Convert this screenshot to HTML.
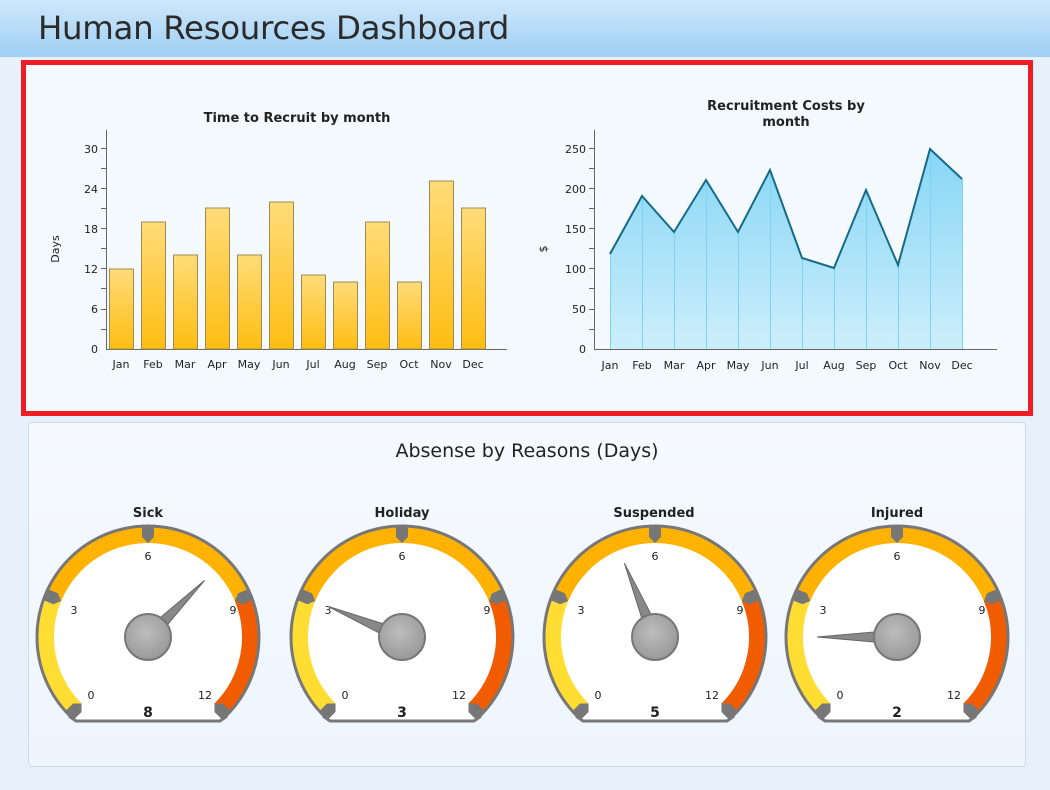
<!DOCTYPE html>
<html><head><meta charset="utf-8"><style>
body{margin:0;width:1050px;height:790px;background:#e6f1fc;font-family:"Liberation Sans","DejaVu Sans",sans-serif;overflow:hidden;position:relative}
.hdr{position:absolute;left:0;top:0;width:1050px;height:57px;background:linear-gradient(#cfe7fb,#9fcff3)}
.hdr h1{margin:0;position:absolute;left:38px;top:9px;font-weight:normal;font-size:32.4px;color:#2b2b2b;font-family:"DejaVu Sans","Liberation Sans",sans-serif;letter-spacing:-0.3px}
.red{position:absolute;left:21px;top:60px;width:1002px;height:346px;border:5px solid #ee1c25;background:#f4f9fe}
.pan{position:absolute;left:28px;top:422px;width:996px;height:343px;border:1px solid #cfdbe6;border-radius:4px;background:linear-gradient(#f6faff,#eef5fd)}
svg{position:absolute;left:0;top:0}
text{font-family:"DejaVu Sans","Liberation Sans",sans-serif;fill:#222}
</style></head><body>
<div class="hdr"><h1>Human Resources Dashboard</h1></div>
<div class="red"></div>
<div class="pan"></div>
<svg width="1050" height="790" viewBox="0 0 1050 790">
<defs>
<linearGradient id="bg" x1="0" y1="0" x2="0" y2="1"><stop offset="0" stop-color="#ffdc7a"/><stop offset="1" stop-color="#fdbd12"/></linearGradient>
<linearGradient id="ag" x1="0" y1="0" x2="0" y2="1"><stop offset="0" stop-color="#86d6f5"/><stop offset="1" stop-color="#cdeefb"/></linearGradient>
<radialGradient id="hub" cx="0.45" cy="0.4" r="0.6"><stop offset="0" stop-color="#bdbdbd"/><stop offset="1" stop-color="#999"/></radialGradient>
<g id="tick"><polygon points="-6,-112 6,-112 6,-100 0,-94 -6,-100" fill="#777"/></g>
<g id="gauge">
<path d="M -66.5,66.5 A 94 94 0 1 1 66.5,66.5 L 79,79 L 72,84 L -72,84 L -79,79 Z" fill="#fff"/>
<circle r="102" fill="none" stroke="#ffdd33" stroke-width="16" stroke-dasharray="120.2 520.7" transform="rotate(135)"/>
<circle r="102" fill="none" stroke="#ffb300" stroke-width="16" stroke-dasharray="240.3 400.6" transform="rotate(202.5)"/>
<circle r="102" fill="none" stroke="#f25c00" stroke-width="16" stroke-dasharray="120.2 520.7" transform="rotate(337.5)"/>
<circle r="111" fill="none" stroke="#777" stroke-width="3" stroke-dasharray="523 175" transform="rotate(135)"/>
<polyline points="-79,79 -72,84 72,84 79,79" fill="none" stroke="#777" stroke-width="3"/>
<use href="#tick" transform="rotate(-135)"/><use href="#tick" transform="rotate(-67.5)"/><use href="#tick"/><use href="#tick" transform="rotate(67.5)"/><use href="#tick" transform="rotate(135)"/>
<g font-size="11" text-anchor="middle"><text x="0" y="-77">6</text><text x="-74" y="-23">3</text><text x="85" y="-23">9</text><text x="-57" y="62">0</text><text x="57" y="62">12</text></g>
</g>
</defs>

<!-- bar chart -->
<text x="297" y="122" font-size="13" font-weight="bold" text-anchor="middle">Time to Recruit by month</text>
<text transform="translate(59,249) rotate(-90)" font-size="11" text-anchor="middle">Days</text>
<g stroke="#666" stroke-width="1">
<line x1="106.5" y1="130" x2="106.5" y2="349"/><line x1="106" y1="349.5" x2="507" y2="349.5"/>
<line x1="101" y1="148.5" x2="106" y2="148.5"/><line x1="101" y1="168.5" x2="106" y2="168.5"/><line x1="101" y1="188.5" x2="106" y2="188.5"/><line x1="101" y1="208.5" x2="106" y2="208.5"/><line x1="101" y1="228.5" x2="106" y2="228.5"/><line x1="101" y1="248.5" x2="106" y2="248.5"/><line x1="101" y1="268.5" x2="106" y2="268.5"/><line x1="101" y1="288.5" x2="106" y2="288.5"/><line x1="101" y1="309.5" x2="106" y2="309.5"/><line x1="101" y1="329.5" x2="106" y2="329.5"/>
</g>
<g font-size="11" text-anchor="end"><text x="98" y="153">30</text><text x="98" y="193">24</text><text x="98" y="233">18</text><text x="98" y="273">12</text><text x="98" y="313">6</text><text x="98" y="353">0</text></g>
<g fill="url(#bg)" stroke="#a08a50" stroke-width="1">
<rect x="109.5" y="269" width="24" height="80"/><rect x="141.5" y="222" width="24" height="127"/><rect x="173.5" y="255" width="24" height="94"/><rect x="205.5" y="208" width="24" height="141"/><rect x="237.5" y="255" width="24" height="94"/><rect x="269.5" y="202" width="24" height="147"/><rect x="301.5" y="275" width="24" height="74"/><rect x="333.5" y="282" width="24" height="67"/><rect x="365.5" y="222" width="24" height="127"/><rect x="397.5" y="282" width="24" height="67"/><rect x="429.5" y="181" width="24" height="168"/><rect x="461.5" y="208" width="24" height="141"/>
</g>
<g font-size="11" text-anchor="middle"><text x="121" y="368">Jan</text><text x="153" y="368">Feb</text><text x="185" y="368">Mar</text><text x="217" y="368">Apr</text><text x="249" y="368">May</text><text x="281" y="368">Jun</text><text x="313" y="368">Jul</text><text x="345" y="368">Aug</text><text x="377" y="368">Sep</text><text x="409" y="368">Oct</text><text x="441" y="368">Nov</text><text x="473" y="368">Dec</text></g>

<!-- area chart -->
<text x="786" y="110" font-size="13" font-weight="bold" text-anchor="middle">Recruitment Costs by</text>
<text x="786" y="126" font-size="13" font-weight="bold" text-anchor="middle">month</text>
<text transform="translate(547,249) rotate(-90)" font-size="11" text-anchor="middle">$</text>
<polygon points="610,349 610,254 642,196 674,232 706,180 738,232 770,170 802,258 834,268 866,190 898,265 930,149 962,179 962,349" fill="url(#ag)"/>
<g stroke="#7dd3f3" stroke-width="1"><line x1="642.5" y1="197" x2="642.5" y2="349"/><line x1="674.5" y1="233" x2="674.5" y2="349"/><line x1="706.5" y1="181" x2="706.5" y2="349"/><line x1="738.5" y1="233" x2="738.5" y2="349"/><line x1="770.5" y1="171" x2="770.5" y2="349"/><line x1="802.5" y1="258" x2="802.5" y2="349"/><line x1="834.5" y1="268" x2="834.5" y2="349"/><line x1="866.5" y1="190" x2="866.5" y2="349"/><line x1="898.5" y1="265" x2="898.5" y2="349"/><line x1="930.5" y1="149" x2="930.5" y2="349"/><line x1="962.5" y1="179" x2="962.5" y2="349"/><line x1="610.5" y1="254" x2="610.5" y2="349"/></g>
<polyline points="610,254 642,196 674,232 706,180 738,232 770,170 802,258 834,268 866,190 898,265 930,149 962,179" fill="none" stroke="#156a8a" stroke-width="2"/>
<g stroke="#666" stroke-width="1">
<line x1="594.5" y1="130" x2="594.5" y2="349"/><line x1="594" y1="349.5" x2="997" y2="349.5"/>
<line x1="589" y1="148.5" x2="594" y2="148.5"/><line x1="589" y1="168.5" x2="594" y2="168.5"/><line x1="589" y1="188.5" x2="594" y2="188.5"/><line x1="589" y1="208.5" x2="594" y2="208.5"/><line x1="589" y1="228.5" x2="594" y2="228.5"/><line x1="589" y1="248.5" x2="594" y2="248.5"/><line x1="589" y1="268.5" x2="594" y2="268.5"/><line x1="589" y1="288.5" x2="594" y2="288.5"/><line x1="589" y1="309.5" x2="594" y2="309.5"/><line x1="589" y1="329.5" x2="594" y2="329.5"/>
</g>
<g font-size="11" text-anchor="end"><text x="586" y="153">250</text><text x="586" y="193">200</text><text x="586" y="233">150</text><text x="586" y="273">100</text><text x="586" y="313">50</text><text x="586" y="353">0</text></g>
<g font-size="11" text-anchor="middle"><text x="610" y="369">Jan</text><text x="642" y="369">Feb</text><text x="674" y="369">Mar</text><text x="706" y="369">Apr</text><text x="738" y="369">May</text><text x="770" y="369">Jun</text><text x="802" y="369">Jul</text><text x="834" y="369">Aug</text><text x="866" y="369">Sep</text><text x="898" y="369">Oct</text><text x="930" y="369">Nov</text><text x="962" y="369">Dec</text></g>

<!-- gauges -->
<text x="527" y="457" font-size="19" text-anchor="middle" fill="#333">Absense by Reasons (Days)</text>
<g font-size="13" font-weight="bold" text-anchor="middle"><text x="148" y="517">Sick</text><text x="402" y="517">Holiday</text><text x="654" y="517">Suspended</text><text x="897" y="517">Injured</text></g>

<g transform="translate(148,637)"><use href="#gauge"/><polygon points="-7,0 7,0 0,-80" fill="#888" stroke="#666" transform="rotate(45)"/><circle r="23" fill="url(#hub)" stroke="#777" stroke-width="2"/><text y="80" font-size="14" font-weight="bold" text-anchor="middle">8</text></g>
<g transform="translate(402,637)"><use href="#gauge"/><polygon points="-7,0 7,0 0,-80" fill="#888" stroke="#666" transform="rotate(-67.5)"/><circle r="23" fill="url(#hub)" stroke="#777" stroke-width="2"/><text y="80" font-size="14" font-weight="bold" text-anchor="middle">3</text></g>
<g transform="translate(655,637)"><use href="#gauge"/><polygon points="-7,0 7,0 0,-80" fill="#888" stroke="#666" transform="rotate(-22.5)"/><circle r="23" fill="url(#hub)" stroke="#777" stroke-width="2"/><text y="80" font-size="14" font-weight="bold" text-anchor="middle">5</text></g>
<g transform="translate(897,637)"><use href="#gauge"/><polygon points="-7,0 7,0 0,-80" fill="#888" stroke="#666" transform="rotate(-90)"/><circle r="23" fill="url(#hub)" stroke="#777" stroke-width="2"/><text y="80" font-size="14" font-weight="bold" text-anchor="middle">2</text></g>
</svg>
</body></html>
